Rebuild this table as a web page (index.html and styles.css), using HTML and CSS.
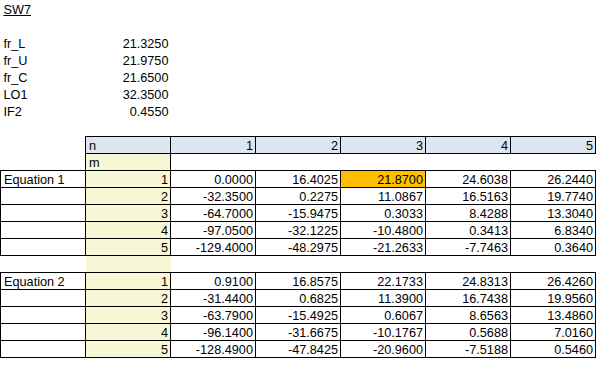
FILE: index.html
```html
<!DOCTYPE html>
<html>
<head>
<meta charset="utf-8">
<link rel="stylesheet" href="styles.css">
</head>
<body>
<table class="sheet">
<colgroup><col><col><col><col><col><col><col></colgroup>
<tbody>
<tr><td class="title"><span class="u">SW7</span></td><td></td><td></td><td></td><td></td><td></td><td></td></tr>
<tr><td></td><td></td><td></td><td></td><td></td><td></td><td></td></tr>
<tr><td>fr_L</td><td class="r">21.3250</td><td></td><td></td><td></td><td></td><td></td></tr>
<tr><td>fr_U</td><td class="r">21.9750</td><td></td><td></td><td></td><td></td><td></td></tr>
<tr><td>fr_C</td><td class="r">21.6500</td><td></td><td></td><td></td><td></td><td></td></tr>
<tr><td>LO1</td><td class="r">32.3500</td><td></td><td></td><td></td><td></td><td></td></tr>
<tr><td>IF2</td><td class="r">0.4550</td><td></td><td></td><td></td><td></td><td></td></tr>
<tr><td></td><td></td><td></td><td></td><td></td><td></td><td></td></tr>
<tr class="hdr"><td class="none"></td><td class="hd">n</td><td class="hd r">1</td><td class="hd r">2</td><td class="hd r">3</td><td class="hd r">4</td><td class="hd r">5</td></tr>
<tr><td class="none"></td><td class="yb">m</td><td></td><td></td><td></td><td></td><td></td></tr>

<tr class="b"><td>Equation 1</td><td class="y r">1</td><td class="r">0.0000</td><td class="r">16.4025</td><td class="r hl">21.8700</td><td class="r">24.6038</td><td class="r">26.2440</td></tr>
<tr class="b"><td></td><td class="y r">2</td><td class="r">-32.3500</td><td class="r">0.2275</td><td class="r">11.0867</td><td class="r">16.5163</td><td class="r">19.7740</td></tr>
<tr class="b"><td></td><td class="y r">3</td><td class="r">-64.7000</td><td class="r">-15.9475</td><td class="r">0.3033</td><td class="r">8.4288</td><td class="r">13.3040</td></tr>
<tr class="b"><td></td><td class="y r">4</td><td class="r">-97.0500</td><td class="r">-32.1225</td><td class="r">-10.4800</td><td class="r">0.3413</td><td class="r">6.8340</td></tr>
<tr class="b"><td></td><td class="y r">5</td><td class="r">-129.4000</td><td class="r">-48.2975</td><td class="r">-21.2633</td><td class="r">-7.7463</td><td class="r">0.3640</td></tr>

<tr><td></td><td class="y"></td><td></td><td></td><td></td><td></td><td></td></tr>

<tr class="b"><td>Equation 2</td><td class="y r">1</td><td class="r">0.9100</td><td class="r">16.8575</td><td class="r">22.1733</td><td class="r">24.8313</td><td class="r">26.4260</td></tr>
<tr class="b"><td></td><td class="y r">2</td><td class="r">-31.4400</td><td class="r">0.6825</td><td class="r">11.3900</td><td class="r">16.7438</td><td class="r">19.9560</td></tr>
<tr class="b"><td></td><td class="y r">3</td><td class="r">-63.7900</td><td class="r">-15.4925</td><td class="r">0.6067</td><td class="r">8.6563</td><td class="r">13.4860</td></tr>
<tr class="b"><td></td><td class="y r">4</td><td class="r">-96.1400</td><td class="r">-31.6675</td><td class="r">-10.1767</td><td class="r">0.5688</td><td class="r">7.0160</td></tr>
<tr class="b"><td></td><td class="y r">5</td><td class="r">-128.4900</td><td class="r">-47.8425</td><td class="r">-20.9600</td><td class="r">-7.5188</td><td class="r">0.5460</td></tr>
</tbody>
</table>
</body>
</html>
```
FILE: styles.css
```css
html, body {
  margin: 0;
  padding: 0;
  background: #ffffff;
}
body {
  font-family: "Liberation Sans", Arial, sans-serif;
  font-size: 12.7px;
  color: #000000;
}
.sheet {
  border-collapse: collapse;
  table-layout: fixed;
  width: 596px;
}
.sheet col {
  width: 85px;
}
.sheet tr {
  height: 17px;
}
.sheet td {
  box-sizing: border-box;
  padding: 0 2px 0 3px;
  height: 17px;
  line-height: 13px;
  vertical-align: bottom;
  white-space: nowrap;
  overflow: hidden;
  border: 0 none;
}
.r {
  text-align: right;
}
.u {
  text-decoration: underline;
}
.hd {
  background: #dde6f0;
  border: 1px solid #000 !important;
}
.yb {
  background: #f7f7d6;
  border: 1px solid #000 !important;
}
.y {
  background: #f7f7d6;
}
.b td {
  border: 1px solid #000;
}
.hl {
  background: #ffbf00;
}
```
